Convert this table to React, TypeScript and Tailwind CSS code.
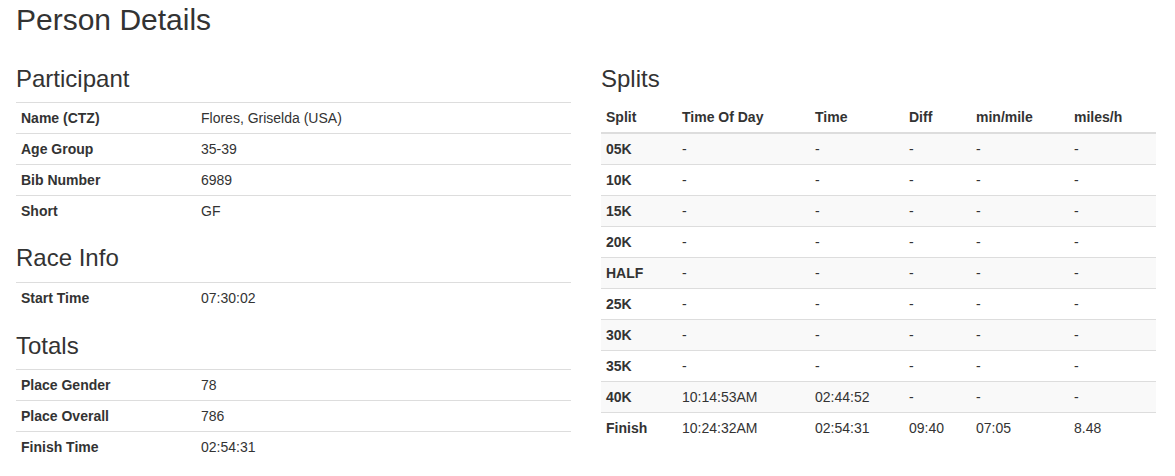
import React from 'react';

type Row = [string, string];

const participant: Row[] = [
  ['Name (CTZ)', 'Flores, Griselda (USA)'],
  ['Age Group', '35-39'],
  ['Bib Number', '6989'],
  ['Short', 'GF'],
];

const raceInfo: Row[] = [['Start Time', '07:30:02']];

const totals: Row[] = [
  ['Place Gender', '78'],
  ['Place Overall', '786'],
  ['Finish Time', '02:54:31'],
];

const splits: string[][] = [
  ['05K', '-', '-', '-', '-', '-'],
  ['10K', '-', '-', '-', '-', '-'],
  ['15K', '-', '-', '-', '-', '-'],
  ['20K', '-', '-', '-', '-', '-'],
  ['HALF', '-', '-', '-', '-', '-'],
  ['25K', '-', '-', '-', '-', '-'],
  ['30K', '-', '-', '-', '-', '-'],
  ['35K', '-', '-', '-', '-', '-'],
  ['40K', '10:14:53AM', '02:44:52', '-', '-', '-'],
  ['Finish', '10:24:32AM', '02:54:31', '09:40', '07:05', '8.48'],
];

const headers = ['Split', 'Time Of Day', 'Time', 'Diff', 'min/mile', 'miles/h'];
const colWidths = ['w-[76px]', 'w-[133px]', 'w-[94px]', 'w-[67px]', 'w-[98px]', 'w-[87px]'];

function InfoTable({ title, rows, top }: { title: string; rows: Row[]; top: string }) {
  return (
    <div>
      <h3 className={`${top} mb-[10px] text-[24px] leading-[26.4px] font-normal`}>{title}</h3>
      <table className="w-full">
        <tbody>
          {rows.map(([label, value]) => (
            <tr key={label}>
              <th className="w-[180px] text-left font-bold p-[5px] leading-[20px] border-t border-[#ddd]">
                {label}
              </th>
              <td className="p-[5px] leading-[20px] border-t border-[#ddd]">{value}</td>
            </tr>
          ))}
        </tbody>
      </table>
    </div>
  );
}

export default function App() {
  return (
    <div className="min-h-screen bg-white text-[#333] text-[14px] font-['Liberation_Sans',Arial,sans-serif]">
      <div className="ml-[16px] w-[1140px]">
        <h2 className="mt-[3px] mb-[10px] text-[30px] leading-[33px] font-normal">Person Details</h2>

        <div className="grid grid-cols-[555px_555px] gap-x-[30px]">
          <div>
            <InfoTable title="Participant" rows={participant} top="mt-[20px]" />
            <InfoTable title="Race Info" rows={raceInfo} top="mt-[19px]" />
            <InfoTable title="Totals" rows={totals} top="mt-[20px]" />
          </div>

          <div>
            <h3 className="mt-[20px] mb-[10px] text-[24px] leading-[26.4px] font-normal">Splits</h3>
            <table className="w-full table-fixed">
              <thead>
                <tr>
                  {headers.map((h, i) => (
                    <th
                      key={h}
                      className={`${colWidths[i]} text-left font-bold p-[5px] leading-[20px] align-bottom border-b-2 border-[#ddd]`}
                    >
                      {h}
                    </th>
                  ))}
                </tr>
              </thead>
              <tbody>
                {splits.map((row, r) => (
                  <tr key={row[0]} className={r % 2 === 0 ? 'bg-[#f9f9f9]' : ''}>
                    {row.map((cell, i) =>
                      i === 0 ? (
                        <th key={i} className="text-left font-bold p-[5px] leading-[20px] border-t border-[#ddd]">
                          {cell}
                        </th>
                      ) : (
                        <td key={i} className="p-[5px] leading-[20px] border-t border-[#ddd]">
                          {cell}
                        </td>
                      )
                    )}
                  </tr>
                ))}
              </tbody>
            </table>
          </div>
        </div>
      </div>
    </div>
  );
}
